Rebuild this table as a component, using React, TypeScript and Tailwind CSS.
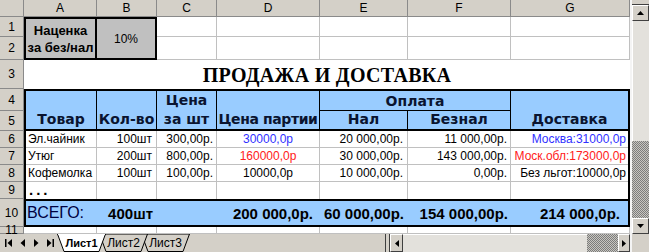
import React from "react";

const HDR =
  "bg-[#d4d0c8] border-r border-b border-[#8a8a8a] flex items-center justify-center text-[12px] text-black";
const GRID = "border-r border-b border-[#c0c0c0] bg-white";
const BLUE = "bg-[#99ccff]";
const HFONT = "font-['DejaVu_Sans',sans-serif] font-bold text-[14px] text-[#0a1430]";

const colStart = [
  "col-start-1",
  "col-start-2",
  "col-start-3",
  "col-start-4",
  "col-start-5",
  "col-start-6",
  "col-start-7",
  "col-start-8",
];
const rowStart = [
  "row-start-1",
  "row-start-2",
  "row-start-3",
  "row-start-4",
  "row-start-5",
  "row-start-6",
  "row-start-7",
  "row-start-8",
  "row-start-9",
  "row-start-10",
  "row-start-11",
  "row-start-12",
];

type Row = {
  a: string;
  b: string;
  c: string;
  d: string;
  dc: string;
  e: string;
  f: string;
  g: string;
  gc: string;
};

const data: Row[] = [
  {
    a: "Эл.чайник",
    b: "100шт",
    c: "300,00р.",
    d: "30000,0р",
    dc: "text-[#3030ff]",
    e: "20 000,00р.",
    f: "11 000,00р.",
    g: "Москва:31000,0р",
    gc: "text-[#3030ff]",
  },
  {
    a: "Утюг",
    b: "200шт",
    c: "800,00р.",
    d: "160000,0р",
    dc: "text-[#ff2020]",
    e: "30 000,00р.",
    f: "143 000,00р.",
    g: "Моск.обл:173000,0р",
    gc: "text-[#ff2020]",
  },
  {
    a: "Кофемолка",
    b: "100шт",
    c: "100,00р.",
    d: "10000,0р",
    dc: "text-black",
    e: "10 000,00р.",
    f: "0,00р.",
    g: "Без льгот:10000,0р",
    gc: "text-black",
  },
];

function Btn({ children, className = "" }: { children?: React.ReactNode; className?: string }) {
  return (
    <div
      className={
        "bg-[#d4d0c8] border border-t-white border-l-white border-r-[#404040] border-b-[#404040] flex items-center justify-center " +
        className
      }
    >
      {children}
    </div>
  );
}

const DITHER =
  "bg-[repeating-conic-gradient(#7c7c7c_0%_25%,#c8c6c0_0%_50%)] bg-[length:2px_2px]";

function VScroll() {
  return (
    <div className="w-[19px] h-full flex flex-col border-l-2 border-l-[#f4f4f4] bg-[#d4d0c8]">
      <div className="h-[5px] border-b border-[#404040] bg-[#d4d0c8]" />
      <Btn className="h-[16px]">
        <svg width="7" height="4" viewBox="0 0 7 4">
          <path d="M3.5 0L7 4H0Z" fill="#000" />
        </svg>
      </Btn>
      <div className="h-[120px] bg-[#e3e1dc] border-l border-white" />
      <div className={"flex-1 " + DITHER} />
      <Btn className="h-[16px]">
        <svg width="7" height="4" viewBox="0 0 7 4">
          <path d="M0 0H7L3.5 4Z" fill="#000" />
        </svg>
      </Btn>
    </div>
  );
}

function Tab({
  label,
  active,
  z,
  first,
}: {
  label: string;
  active?: boolean;
  z: string;
  first?: boolean;
}) {
  return (
    <div className={"relative w-[49px] h-full shrink-0 " + z + (first ? "" : " -ml-[7px]")}>
      <svg className="absolute inset-0" width="49" height="18" viewBox="0 0 49 18">
        <polygon
          points="0.5,0 48.5,0 42,17.5 7,17.5"
          fill={active ? "#ffffff" : "#d4d0c8"}
          stroke="#000"
          strokeWidth="1"
        />
        {active && <line x1="1" y1="0" x2="48" y2="0" stroke="#ffffff" strokeWidth="2" />}
      </svg>
      <div
        className={
          "relative h-full flex items-center justify-center text-black font-['Liberation_Sans',Arial,sans-serif] " +
          (active ? "font-bold text-[11px]" : "text-[12px]")
        }
      >
        {label}
      </div>
    </div>
  );
}

function TabBar() {
  const nav = [
    <svg key="1" width="7" height="8" viewBox="0 0 7 8">
      <rect x="0" y="0" width="1.5" height="8" fill="#000" />
      <path d="M7 0V8L2.5 4Z" fill="#000" />
    </svg>,
    <svg key="2" width="5" height="8" viewBox="0 0 5 8">
      <path d="M5 0V8L0.5 4Z" fill="#000" />
    </svg>,
    <svg key="3" width="5" height="8" viewBox="0 0 5 8">
      <path d="M0 0V8L4.5 4Z" fill="#000" />
    </svg>,
    <svg key="4" width="7" height="8" viewBox="0 0 7 8">
      <path d="M0 0V8L4.5 4Z" fill="#000" />
      <rect x="5.5" y="0" width="1.5" height="8" fill="#000" />
    </svg>,
  ];
  return (
    <div className="h-[18px] flex bg-[#d4d0c8]">
      <div className="flex items-center pl-[2px] gap-[1px] w-[57px] shrink-0">
        {nav.map((n, i) => (
          <div key={i} className="w-[13px] h-[15px] flex items-center justify-center">
            {n}
          </div>
        ))}
      </div>
      <Tab label="Лист1" active z="z-30" first />
      <Tab label="Лист2" z="z-20" />
      <Tab label="Лист3" z="z-10" />
      <div className="flex-1" />
      <div className="w-[245px] flex h-full">
        <div className="w-[5px] h-full border-l border-r border-[#404040] bg-[#d4d0c8]" />
        <Btn className="w-[13px] h-full">
          <svg width="4" height="7" viewBox="0 0 4 7">
            <path d="M4 0V7L0 3.5Z" fill="#000" />
          </svg>
        </Btn>
        <div className="w-[184px] h-full bg-[#e3e1dc] border-t border-white" />
        <div className={"w-[31px] h-full " + DITHER} />
        <Btn className="w-[12px] h-full">
          <svg width="4" height="7" viewBox="0 0 4 7">
            <path d="M0 0V7L4 3.5Z" fill="#000" />
          </svg>
        </Btn>
      </div>
      <div className="w-[19px] h-full border-l-2 border-l-[#f4f4f4] bg-[#d4d0c8]" />
    </div>
  );
}

export default function App() {
  const cols = ["A", "B", "C", "D", "E", "F", "G"];
  const dataCell =
    "border-r border-b border-[#c0c0c0] bg-white flex items-end pb-[2px] text-[12px] whitespace-nowrap";
  return (
    <div className="w-[649px] h-[252px] overflow-hidden bg-white flex flex-col font-['Liberation_Sans',Arial,sans-serif] leading-none">
      <div className="flex h-[234px]">
        <div className="w-[630px] h-full grid grid-cols-[24px_73px_60px_60px_103px_88px_103px_119px] grid-rows-[17px_20px_23px_29px_22px_20px_17px_17px_17px_17px_28px_7px]">
          {/* column headers */}
          <div className={HDR + " col-start-1 row-start-1"} />
          {cols.map((c, i) => (
            <div key={c} className={HDR + " row-start-1 " + colStart[i + 1]}>
              {c}
            </div>
          ))}
          {/* row headers */}
          {Array.from({ length: 11 }, (_, i) => (
            <div key={i} className={HDR + " col-start-1 " + rowStart[i + 1]}>
              {i + 1}
            </div>
          ))}

          {/* rows 1-2 */}
          <div className="col-start-2 row-start-2 row-span-2 bg-[#c0c0c0] border-2 border-black flex flex-col items-center justify-center font-bold text-[13px] leading-[17px] text-black">
            <span>Наценка</span>
            <span>за без/нал</span>
          </div>
          <div className="col-start-3 row-start-2 row-span-2 bg-[#c0c0c0] border-2 border-l-0 border-black flex items-center justify-center text-[12px] text-black">
            10%
          </div>
          {[3, 4, 5, 6, 7].map((c) => (
            <React.Fragment key={c}>
              <div className={GRID + " row-start-2 " + colStart[c]} />
              <div className={GRID + " row-start-3 " + colStart[c]} />
            </React.Fragment>
          ))}

          {/* row 3 title */}
          <div className="col-start-2 col-span-7 row-start-4 bg-white flex items-center justify-center font-['Liberation_Serif',serif] font-bold text-[20px] tracking-[0.3px] text-black">
            ПРОДАЖА И ДОСТАВКА
          </div>

          {/* table rows 4-10 */}
          <div className="col-start-2 col-span-7 row-start-5 row-span-7 border-2 border-black grid grid-cols-[71px_60px_60px_103px_88px_103px_117px] grid-rows-[20px_20px_17px_17px_17px_17px_26px]">
            {/* header */}
            <div className={BLUE + " " + HFONT + " col-start-1 row-start-1 row-span-2 border-r border-black border-b-2 flex items-end justify-center pb-[3px]"}>
              Товар
            </div>
            <div className={BLUE + " " + HFONT + " col-start-2 row-start-1 row-span-2 border-r border-black border-b-2 flex items-end justify-center pb-[3px]"}>
              Кол-во
            </div>
            <div className={BLUE + " " + HFONT + " col-start-3 row-start-1 row-span-2 border-r border-black border-b-2 flex flex-col items-center justify-center leading-[19px]"}>
              <span>Цена</span>
              <span>за шт</span>
            </div>
            <div className={BLUE + " " + HFONT + " col-start-4 row-start-1 row-span-2 border-r border-black border-b-2 flex items-end justify-center pb-[3px] whitespace-nowrap tracking-[-0.4px]"}>
              Цена партии
            </div>
            <div className={BLUE + " " + HFONT + " col-start-5 col-span-2 row-start-1 border-r border-b border-black flex items-center justify-center"}>
              Оплата
            </div>
            <div className={BLUE + " " + HFONT + " col-start-5 row-start-2 border-r border-black border-b-2 flex items-end justify-center pb-[3px]"}>
              Нал
            </div>
            <div className={BLUE + " " + HFONT + " col-start-6 row-start-2 border-r border-black border-b-2 flex items-end justify-center pb-[3px]"}>
              Безнал
            </div>
            <div className={BLUE + " " + HFONT + " col-start-7 row-start-1 row-span-2 border-black border-b-2 flex items-end justify-center pb-[3px]"}>
              Доставка
            </div>

            {/* data rows */}
            {data.map((r, i) => (
              <React.Fragment key={i}>
                <div className={dataCell + " pl-[2px] text-black"}>{r.a}</div>
                <div className={dataCell + " justify-end pr-[4px] text-black"}>{r.b}</div>
                <div className={dataCell + " justify-end pr-[3px] text-black"}>{r.c}</div>
                <div className={dataCell + " justify-center " + r.dc}>{r.d}</div>
                <div className={dataCell + " justify-end pr-[4px] text-black"}>{r.e}</div>
                <div className={dataCell + " justify-end pr-[3px] text-black"}>{r.f}</div>
                <div className={dataCell + " justify-end pr-[2px] border-r-0 " + r.gc}>{r.g}</div>
              </React.Fragment>
            ))}
            {/* row 9 */}
            <div className="border-r border-[#c0c0c0] bg-white flex items-end pl-[3px] pb-[2px] font-bold text-[15px] tracking-[3px] text-black">
              ...
            </div>
            <div className="border-r border-[#c0c0c0] bg-white" />
            <div className="border-r border-[#c0c0c0] bg-white" />
            <div className="border-r border-[#c0c0c0] bg-white" />
            <div className="border-r border-[#c0c0c0] bg-white" />
            <div className="border-r border-[#c0c0c0] bg-white" />
            <div className="bg-white" />

            {/* row 10 totals */}
            <div className={BLUE + " border-t-2 border-black flex items-center pl-[1px] text-[16px] text-[#000040]"}>
              ВСЕГО:
            </div>
            <div className={BLUE + " border-t-2 border-black flex items-center justify-end pr-[4px] font-bold text-[15px] text-black whitespace-nowrap"}>
              400шт
            </div>
            <div className={BLUE + " border-t-2 border-black"} />
            <div className={BLUE + " border-t-2 border-black flex items-center justify-end pr-[7px] font-bold text-[15px] text-black whitespace-nowrap"}>
              200 000,0р.
            </div>
            <div className={BLUE + " border-t-2 border-black flex items-center justify-end pr-[4px] font-bold text-[15px] text-black whitespace-nowrap"}>
              60 000,00р.
            </div>
            <div className={BLUE + " border-t-2 border-black flex items-center justify-end pr-[3px] font-bold text-[15px] text-black whitespace-nowrap"}>
              154 000,00р.
            </div>
            <div className={BLUE + " border-t-2 border-black flex items-center justify-end pr-[8px] font-bold text-[15px] text-black whitespace-nowrap"}>
              214 000,0р.
            </div>
          </div>

          {/* row 11 */}
          {[1, 2, 3, 4, 5, 6, 7].map((c) => (
            <div key={c} className={GRID + " row-start-12 " + colStart[c]} />
          ))}
        </div>
        <VScroll />
      </div>
      <TabBar />
    </div>
  );
}
